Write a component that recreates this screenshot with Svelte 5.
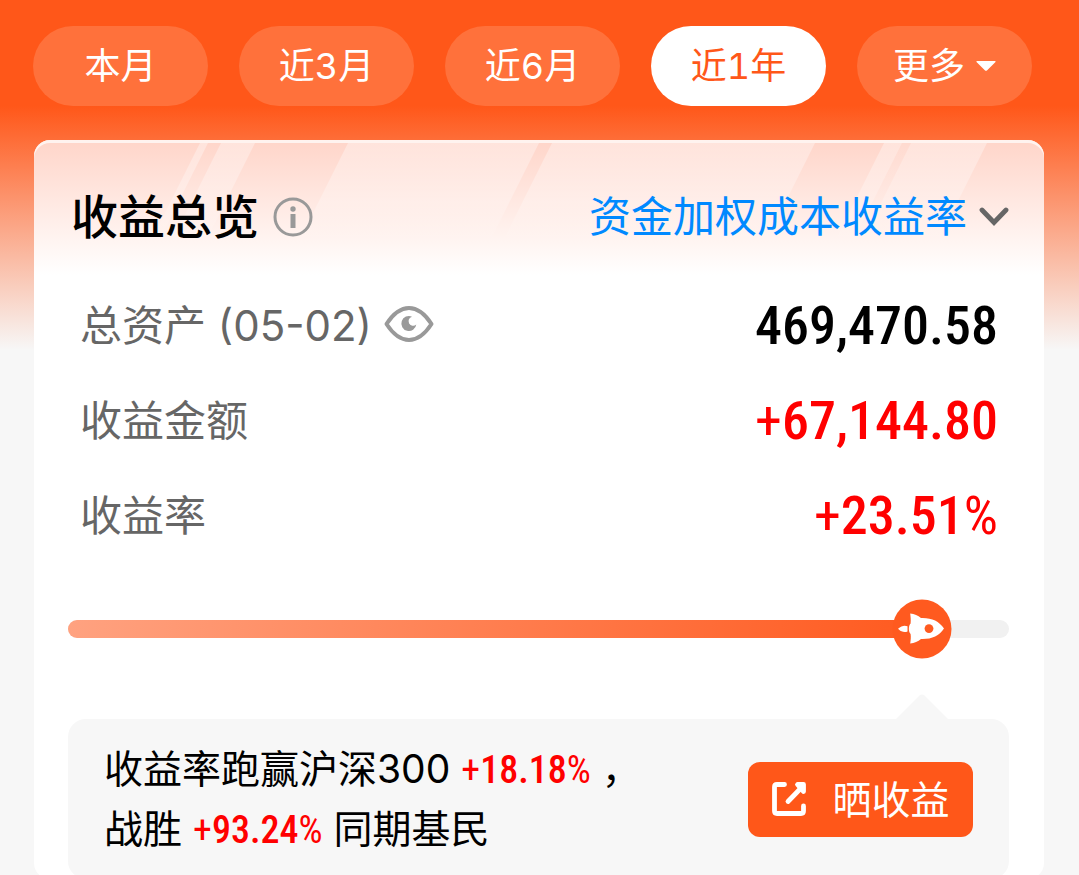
<script>
  const periods = [
    { id: 'month', label: '本月' },
    { id: 'm3', label: '近3月' },
    { id: 'm6', label: '近6月' },
    { id: 'y1', label: '近1年' }
  ];
  let active = $state('y1');

  const rows = [
    { label: '总资产', date: '(05-02)', sign: '', value: '469,470.58', unit: '' },
    { label: '收益金额', sign: '+', value: '67,144.80', unit: '', up: true },
    { label: '收益率', sign: '+', value: '23.51', unit: '%', up: true }
  ];
  const progress = 90.75;
</script>

{#snippet gain(sign, value, unit)}{#if sign}<span class="thin">{sign}</span>{/if}{value}{#if unit}<span class="thin">{unit}</span>{/if}{/snippet}

<main class="page">
  <nav class="periods" aria-label="时间范围">
    {#each periods as p (p.id)}
      <button class="pill" class:active={active === p.id} onclick={() => (active = p.id)}>{p.label}</button>
    {/each}
    <button class="pill more">
      更多
      <svg width="20" height="10" viewBox="0 0 20 10" aria-hidden="true">
        <path d="M1 0H19Q20 0 19.500 1L11.200 9.200Q10 10.400 8.800 9.200L0.500 1Q0 0 1 0Z" fill="#fff" />
      </svg>
    </button>
  </nav>

  <section class="card">
    <svg class="rays" viewBox="0 0 1010 135" preserveAspectRatio="none" aria-hidden="true">
      <defs>
        <linearGradient id="ray" x1="0" y1="0" x2="0" y2="135" gradientUnits="userSpaceOnUse">
          <stop offset="0" stop-color="#fff" stop-opacity=".34" />
          <stop offset=".45" stop-color="#fff" stop-opacity=".26" />
          <stop offset=".75" stop-color="#fff" stop-opacity="0" />
        </linearGradient>
      </defs>
      <g fill="url(#ray)">
        <path d="M166 0h8L108 135h-8z" />
        <path d="M187 0h34L155 135h-34z" />
        <path d="M314 0H505L439 135H248z" />
        <path d="M518 0H781L715 135H452z" />
        <path d="M850 0h18L802 135h-18z" />
        <path d="M868 0h9L811 135h-9z" opacity=".3" />
        <path d="M877 0h76L887 135h-76z" />
      </g>
    </svg>

    <header class="head">
      <div class="title">
        <h1>收益总览</h1>
        <button class="icon" aria-label="说明">
          <svg width="40" height="40" viewBox="0 0 40 40">
            <circle cx="20" cy="20" r="18" fill="none" stroke="#999" stroke-width="3" />
            <circle cx="20" cy="12" r="2.700" fill="#999" />
            <rect x="17.500" y="17" width="5" height="14" fill="#999" />
          </svg>
        </button>
      </div>
      <button class="method">
        资金加权成本收益率
        <svg width="30" height="20" viewBox="0 0 30 20" aria-hidden="true">
          <path d="M3 3L15 15.500L27 3" fill="none" stroke="#666" stroke-width="4.800" stroke-linecap="round" />
        </svg>
      </button>
    </header>

    <dl class="rows">
      {#each rows as r (r.label)}
        <div class="row">
          <dt>
            {r.label}
            {#if r.date}
              {r.date}
              <button class="icon eye" aria-label="隐藏金额">
                <svg width="50" height="38" viewBox="0 0 50 38">
                  <path d="M2.500 19C9 9 16 3 25 3S41 9 47.500 19C41 29 34 35 25 35S9 29 2.500 19Z" fill="none" stroke="#999" stroke-width="4" stroke-linejoin="round" />
                  <path d="M28 11.700A7.500 7.500 0 1 0 32.300 19.500A4.600 4.600 0 1 1 28 11.700Z" fill="#999" />
                </svg>
              </button>
            {/if}
          </dt>
          <dd class:up={r.up}>{@render gain(r.sign, r.value, r.unit)}</dd>
        </div>
      {/each}
    </dl>

    <div class="track" role="progressbar" aria-label="战胜同期基民" aria-valuenow="93.24" aria-valuemin="0" aria-valuemax="100">
      <div class="fill" style="width: {progress}%"></div>
      <svg class="rocket" style="left: {progress}%" viewBox="0 0 60 60" aria-hidden="true">
        <circle cx="30" cy="30" r="29.500" fill="#ff5a1f" />
        <path d="M52 29.500C47 22 39.500 18.600 29 19C26 16.500 22.500 15 18.200 14.600C18.600 18 19 21 18.600 24.500C16.300 26.500 16.300 33 18.600 35C19 38 18.800 41 18.200 44.500C22.500 44.200 26 42.500 29 40C39.500 40.400 47 37 52 29.500Z" fill="#fff" />
        <path d="M6 29.800C9.500 26.600 12.500 26.200 15.500 27.200V32.400C12.500 33.600 9.500 33 6 29.800Z" fill="#fff" />
        <circle cx="37" cy="29.600" r="4.400" fill="#ff5a1f" />
      </svg>
    </div>

    <div class="summary">
      <svg class="arrow" style="left: {progress}%" viewBox="0 0 52 25" aria-hidden="true">
        <path d="M0 25L23.500 1.500Q26 -0.500 28.500 1.500L52 25Z" fill="#f7f7f7" />
      </svg>
      <p>
        收益率跑赢沪深300 <strong>{@render gain('+', '18.18', '%')}</strong> ，<br />
        战胜 <strong>{@render gain('+', '93.24', '%')}</strong> 同期基民
      </p>
      <button class="share">
        <svg width="36" height="36" viewBox="0 0 36 36" fill="none" stroke="#fff" stroke-width="4.800" stroke-linecap="round" stroke-linejoin="round" aria-hidden="true">
          <path d="M13.500 3.500H6Q3.500 3.500 3.500 6V30Q3.500 32.500 6 32.500H30Q32.500 32.500 32.500 30V25" />
          <path d="M17 20.500L31 6" />
          <path d="M26.500 3.500H32.500V10.500Z" fill="#fff" />
        </svg>
        晒收益
      </button>
    </div>
  </section>
</main>

<style>
  :global(body) {
    margin: 0;
    background: #f7f7f7;
  }
  .page {
    box-sizing: border-box;
    padding: 26px 35px 0 34px;
    background: linear-gradient(#ff5719 0, #ff5719 106px, #f7f7f7 350px);
    font-family: Inter, 'Noto Sans CJK SC', sans-serif;
    color: #000;
  }
  button {
    font: inherit;
    color: inherit;
    border: 0;
    padding: 0;
    background: none;
    cursor: pointer;
  }
  svg {
    display: block;
    flex: none;
  }
  .periods {
    display: flex;
    gap: 31px;
    margin: 0 12px 34px -1px;
  }
  .pill {
    flex: 1;
    height: 80px;
    border-radius: 40px;
    background: #ff713b;
    color: #fff;
    font-size: 36px;
    font-variant-numeric: tabular-nums;
    line-height: 80px;
    white-space: nowrap;
  }
  .pill.active {
    background: #fff;
    color: #ff5719;
  }
  .more {
    display: flex;
    align-items: center;
    justify-content: center;
    gap: 11px;
  }
  .card {
    position: relative;
    box-sizing: border-box;
    padding: 40px 35px 0 34px;
    border-radius: 16px;
    background: linear-gradient(#ffd5c9 0, #fff 135px);
    box-shadow: inset 0 3px 0 #fff3ef;
  }
  .rays {
    position: absolute;
    top: 3px;
    left: 0;
    width: 100%;
    height: 132px;
  }
  .head {
    position: relative;
    display: flex;
    align-items: center;
    justify-content: space-between;
    height: 74px;
    padding-left: 3px;
  }
  .title {
    display: flex;
    align-items: center;
    gap: 14px;
  }
  h1 {
    margin: 0;
    font-size: 47px;
    font-weight: 500;
    line-height: 74px;
  }
  .method {
    display: flex;
    align-items: center;
    gap: 12px;
    color: #0089ff;
    font-size: 42px;
    line-height: 74px;
  }
  .rows {
    margin: 24px 11px 0 12px;
  }
  .row {
    display: flex;
    align-items: center;
    justify-content: space-between;
    height: 95px;
  }
  dt {
    display: flex;
    align-items: center;
    gap: 12px;
    color: #666;
    font-size: 42px;
    line-height: 95px;
  }
  .eye {
    padding-bottom: 4px;
  }
  dd {
    margin: 0;
    font-family: 'Roboto Condensed', Roboto, sans-serif;
    font-size: 54px;
    font-weight: 500;
    line-height: 95px;
  }
  .up,
  strong {
    color: #f00;
  }
  .thin {
    font-weight: 400;
  }
  .track {
    position: relative;
    height: 18px;
    margin-top: 57px;
    border-radius: 9px;
    background: #f1f1f1;
  }
  .fill {
    height: 100%;
    border-radius: 9px 0 0 9px;
    background: linear-gradient(90deg, #ffa280, #ff5a1f);
  }
  .rocket {
    position: absolute;
    top: 50%;
    width: 60px;
    height: 60px;
    transform: translate(-50%, -50%);
  }
  .summary {
    position: relative;
    display: flex;
    align-items: center;
    justify-content: space-between;
    margin-top: 81px;
    padding: 20px 36px;
    border-radius: 18px;
    background: #f7f7f7;
  }
  .arrow {
    position: absolute;
    bottom: 100%;
    width: 52px;
    height: 25px;
    transform: translateX(-50%);
  }
  p {
    margin: 0;
    font-size: 39px;
    line-height: 60px;
  }
  strong {
    font-family: 'Roboto Condensed', Roboto, sans-serif;
    font-size: 38px;
    font-weight: 500;
    line-height: 1;
  }
  .share {
    display: flex;
    align-items: center;
    justify-content: center;
    gap: 25px;
    width: 225px;
    height: 75px;
    border-radius: 12px;
    background: #ff5719;
    color: #fff;
    font-size: 39px;
    line-height: 75px;
  }
</style>
